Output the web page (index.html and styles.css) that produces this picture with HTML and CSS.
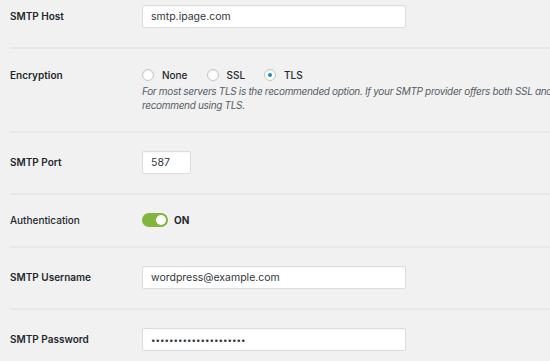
FILE: index.html
```html
<!DOCTYPE html>
<html lang="en">
<head>
  <meta charset="UTF-8" />
  <meta name="viewport" content="width=device-width, initial-scale=1.0"/>
  <title>SMTP Settings</title>
  <link rel="stylesheet" href="styles.css">
</head>
<body>
  <div class="form-table">
    <div class="form-row first">
      <label class="field-label" for="smtpHost">SMTP Host</label>
      <div class="field">
        <input class="text-input wide" id="smtpHost" type="text" value="smtp.ipage.com">
      </div>
    </div>

    <div class="form-row">
      <span class="field-label short">Encryption</span>
      <div class="field">
        <div class="radio-group">
          <label class="radio"><input type="radio" name="enc" value="none"><span>None</span></label>
          <label class="radio"><input type="radio" name="enc" value="ssl"><span>SSL</span></label>
          <label class="radio"><input type="radio" name="enc" value="tls" checked><span>TLS</span></label>
        </div>
        <p class="description">For most servers TLS is the recommended option. If your SMTP provider offers both SSL and TLS, we<br>recommend using TLS.</p>
      </div>
    </div>

    <div class="form-row">
      <label class="field-label" for="smtpPort">SMTP Port</label>
      <div class="field">
        <input class="text-input port" id="smtpPort" type="text" value="587">
      </div>
    </div>

    <div class="form-row">
      <span class="field-label toggle-label">Authentication</span>
      <div class="field">
        <label class="toggle">
          <input type="checkbox" checked>
          <span class="track"></span>
          <span class="toggle-text">ON</span>
        </label>
      </div>
    </div>

    <div class="form-row">
      <label class="field-label" for="smtpUser">SMTP Username</label>
      <div class="field">
        <input class="text-input wide" id="smtpUser" type="text" value="wordpress@example.com">
      </div>
    </div>

    <div class="form-row">
      <label class="field-label" for="smtpPass">SMTP Password</label>
      <div class="field">
        <input class="text-input wide pass" id="smtpPass" type="password" value="passwordpassword12345">
      </div>
    </div>
  </div>
</body>
</html>
```

FILE: styles.css
```css
* { margin: 0; padding: 0; box-sizing: border-box; }
body {
  background-color: #f1f1f1;
  color: #23282d;
  font-family: 'Inter', 'Helvetica Neue', sans-serif;
  font-size: 10px;
  overflow: hidden;
}

.form-table { margin-left: 10px; }

.form-row {
  display: grid;
  grid-template-columns: 132px 1fr;
  align-items: start;
  padding: 18px 0 19px;
  border-bottom: 2px solid #e8e8e8;
}

.form-row.first { padding-top: 5px; }

.field-label {
  font-weight: 600;
  line-height: 23px;
}

.field-label.short { line-height: 16px; }
.field-label.toggle-label { line-height: 14px; font-weight: 500; }

.text-input {
  display: block;
  height: 23px;
  padding: 0 8px;
  border: 1px solid #dcdcdc;
  border-radius: 2px;
  background: #fff;
  box-shadow: inset 0 1px 2px rgba(0, 0, 0, 0.04);
  font-family: inherit;
  font-size: 10.5px;
  color: #32373c;
  outline: none;
}

.text-input.wide { width: 264px; }
.text-input.port { width: 49px; }
.text-input.pass { font-size: 8px; }

.radio-group {
  display: flex;
  align-items: center;
  gap: 19px;
  height: 16px;
}

.radio {
  display: flex;
  align-items: center;
  gap: 8px;
  font-weight: 500;
}

.radio input {
  appearance: none;
  width: 12px;
  height: 12px;
  border: 1px solid #c3c6c9;
  border-radius: 50%;
  background: #fff;
  box-shadow: inset 0 1px 2px rgba(0, 0, 0, 0.08);
  display: grid;
  place-items: center;
  margin: 0;
}

.radio input:checked::before {
  content: "";
  width: 4px;
  height: 4px;
  border-radius: 50%;
  background: #1e8cbe;
}

.description {
  margin-top: 1px;
  font-style: italic;
  color: #555d66;
  line-height: 14px;
  letter-spacing: -0.32px;
  white-space: nowrap;
}

.toggle {
  display: flex;
  align-items: center;
  gap: 6px;
  height: 14px;
}

.toggle input { display: none; }

.track {
  position: relative;
  width: 26px;
  height: 14px;
  border-radius: 7px;
  background: #81b53e;
}

.track::after {
  content: "";
  position: absolute;
  top: 2px;
  right: 2px;
  width: 10px;
  height: 10px;
  border-radius: 50%;
  background: #fff;
}

.toggle-text {
  font-size: 10px;
  font-weight: 700;
}
```
